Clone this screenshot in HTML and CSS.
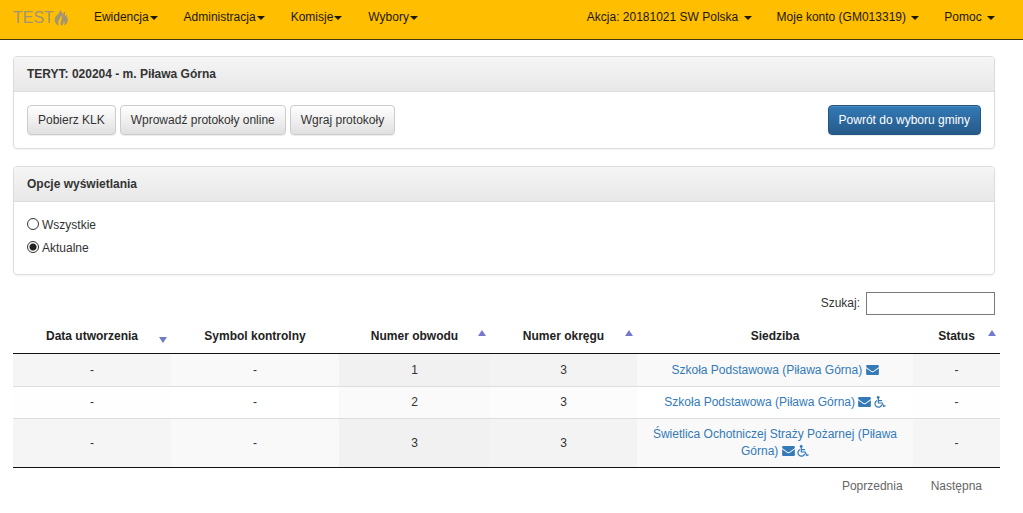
FILE: index.html
```html
<!DOCTYPE html>
<html lang="pl">
<head>
<meta charset="utf-8">
<title>Protokoły - m. Piława Górna</title>
<link rel="stylesheet" href="styles.css">
</head>
<body>
<svg class="symbols" aria-hidden="true">
  <symbol id="envelope" viewBox="0 256 1792 1408"><path fill="currentColor" d="M1792 710v794q0 66-47 113t-113 47h-1472q-66 0-113-47t-47-113v-794q44 49 101 87 362 246 497 345 57 42 92.500 65.500t94.500 48 110 24.500h2q51 0 110-24.500t94.500-48 92.500-65.500q170-123 498-345 57-39 100-87zm0-294q0 79-49 151t-122 123q-376 261-468 325-10 7-42.500 31t-54 38.500-52 32.500-57.500 27-50 9h-2q-23 0-50-9t-57.500-27-52-32.500-54-38.500-42.500-31q-91-64-262-182.500t-205-142.500q-62-42-117-115.500t-55-136.500q0-78 41.500-130t118.500-52h1472q65 0 112.500 47t47.500 113z"/></symbol>
  <symbol id="wheelchair" viewBox="0 0 12 12"><circle cx="4.200" cy="1.400" r="1.400" fill="currentColor"/><path fill="none" stroke="currentColor" stroke-width="1.200" d="M4.300 2v5h4l1.400 3.500 1.800-.9M4.300 4.600h3.700M3 4.500A3.500 3.500 0 1 0 7.800 8.800"/></symbol>
</svg>
<header class="navbar">
  <a class="brand" href="#">TEST<svg class="flame" viewBox="0 0 14 16" aria-hidden="true"><path fill="currentColor" d="M6 0C6.500 3 2 5 1 8c-1 3 0 6 4 8C3.500 13 4 11 5.500 9c1-1.500 1.600-2.500 1.400-4C8.500 7 8 9 7 11c-.8 2-.6 3.500.5 5 2-1.500 2.500-3 2-5.500C11 12 10.800 14 10 15.500c3.500-1.500 4.500-5 3.500-7.500-.3-1-1-2-1-3.500-.8.700-1 1.500-1 2.500C10.500 5 11 3 11.500 1.500 9.500 2 9 4 9 5 8.500 3 8 1 6 0z"/></svg></a>
  <nav class="menu">
    <a href="#">Ewidencja<span class="caret"></span></a>
    <a href="#">Administracja<span class="caret"></span></a>
    <a href="#">Komisje<span class="caret"></span></a>
    <a href="#">Wybory<span class="caret"></span></a>
  </nav>
  <nav class="menu menu-right">
    <a href="#">Akcja: 20181021 SW Polska <span class="caret"></span></a>
    <a href="#">Moje konto (GM013319) <span class="caret"></span></a>
    <a href="#">Pomoc <span class="caret"></span></a>
  </nav>
</header>
<main class="page">
  <section class="panel">
    <h2 class="panel-heading">TERYT: 020204 - m. Piława Górna</h2>
    <div class="panel-body toolbar">
      <button class="btn" type="button">Pobierz KLK</button>
      <button class="btn" type="button">Wprowadź protokoły online</button>
      <button class="btn" type="button">Wgraj protokoły</button>
      <button class="btn btn-primary" type="button">Powrót do wyboru gminy</button>
    </div>
  </section>
  <section class="panel">
    <h2 class="panel-heading">Opcje wyświetlania</h2>
    <div class="panel-body options">
      <label class="option"><input type="radio" name="view">Wszystkie</label>
      <label class="option"><input type="radio" name="view" checked>Aktualne</label>
    </div>
  </section>
  <div class="search">
    <label for="search">Szukaj:</label>
    <input id="search" type="search">
  </div>
  <div class="table-wrap">
    <table class="data">
      <colgroup><col class="c-date"><col class="c-symbol"><col class="c-ward"><col class="c-district"><col class="c-seat"><col class="c-status"></colgroup>
      <thead>
        <tr><th class="sort-desc">Data utworzenia</th><th>Symbol kontrolny</th><th class="sort-asc">Numer obwodu</th><th class="sort-asc">Numer okręgu</th><th>Siedziba</th><th class="sort-asc">Status</th></tr>
      </thead>
      <tbody>
        <tr><td class="s3">-</td><td>-</td><td class="s1">1</td><td class="s2">3</td><td><a href="#">Szkoła Podstawowa (Piława Górna) <svg class="envelope"><use href="#envelope"/></svg></a></td><td class="s3">-</td></tr>
        <tr><td class="s3">-</td><td>-</td><td class="s1">2</td><td class="s2">3</td><td><a href="#">Szkoła Podstawowa (Piława Górna) <svg class="envelope"><use href="#envelope"/></svg> <svg class="wheelchair"><use href="#wheelchair"/></svg></a></td><td class="s3">-</td></tr>
        <tr><td class="s3">-</td><td>-</td><td class="s1">3</td><td class="s2">3</td><td><a href="#">Świetlica Ochotniczej Straży Pożarnej (Piława Górna) <svg class="envelope"><use href="#envelope"/></svg> <svg class="wheelchair"><use href="#wheelchair"/></svg></a></td><td class="s3">-</td></tr>
      </tbody>
    </table>
  </div>
  <div class="pager">
    <button type="button">Poprzednia</button>
    <button type="button">Następna</button>
  </div>
</main>
</body>
</html>
```
FILE: styles.css
```css
* { box-sizing: border-box; }

body {
  margin: 0;
  background: #fff;
  color: #333;
  font: 12px/17px "Liberation Sans", Arial, sans-serif;
}

button, input { font: inherit; color: inherit; }
a { color: #337ab7; text-decoration: none; }
.symbols { display: none; }

.navbar {
  display: flex;
  align-items: center;
  gap: 26px;
  height: 40px;
  padding: 0 28px 4px 13px;
  background: #ffbf00;
  border-bottom: 1px solid #3f3a10;
}
.brand {
  display: flex;
  align-items: center;
  color: #a39473;
  font-size: 16px;
}
.flame { width: 14px; height: 16px; }
.menu { display: flex; gap: 26px; }
.menu a { color: #1c1700; white-space: nowrap; }
.menu-right { gap: 25px; margin-left: auto; }
.caret {
  display: inline-block;
  margin-left: 1px;
  vertical-align: middle;
  border: 4px solid transparent;
  border-top-color: currentColor;
  border-bottom: 0;
}
.menu-right .caret { margin-left: 2px; }

.page { padding: 16px 28px 16px 13px; }

.panel {
  margin-bottom: 17px;
  border: 1px solid #ddd;
  border-radius: 4px;
  box-shadow: 0 1px 2px rgba(0, 0, 0, .05);
}
.panel-heading {
  margin: 0;
  padding: 8px 13px;
  border-bottom: 1px solid #ddd;
  border-radius: 3px 3px 0 0;
  background: linear-gradient(#f5f5f5, #e8e8e8);
  font-size: 12px;
  line-height: 18px;
}
.panel-body { padding: 13px; }

.toolbar { display: flex; gap: 4px; }
.btn {
  height: 30px;
  padding: 0 10px;
  border: 1px solid #ccc;
  border-radius: 4px;
  background: linear-gradient(#fff, #e0e0e0);
  box-shadow: inset 0 1px 0 rgba(255, 255, 255, .15), 0 1px 1px rgba(0, 0, 0, .075);
}
.btn-primary {
  margin-left: auto;
  border-color: #245580;
  background: linear-gradient(#337ab7, #265a88);
  color: #fff;
}

.options {
  display: flex;
  flex-direction: column;
  align-items: flex-start;
  gap: 6px;
  padding: 15px 13px 17px;
}
.option { display: flex; gap: 3px; }
.option input {
  appearance: none;
  width: 12px;
  height: 12px;
  margin: 1px 0 0;
  border: 1px solid #333;
  border-radius: 50%;
  background: #fff;
}
.option input:checked { background: radial-gradient(circle, #222 3px, #fff 4px); }

.search {
  display: flex;
  justify-content: flex-end;
  align-items: center;
  gap: 6px;
  margin-bottom: 5px;
}
.search input {
  appearance: none;
  width: 129px;
  height: 23px;
  padding: 1px 4px;
  border: 1px solid #7a7a7a;
  background: #fff;
}

.table-wrap { margin-right: -5px; }
.data {
  width: 100%;
  table-layout: fixed;
  border-collapse: separate;
  border-spacing: 0;
  border-bottom: 1px solid #111;
  text-align: center;
}
.c-date { width: 158px; }
.c-symbol { width: 168px; }
.c-ward { width: 151px; }
.c-district { width: 147px; }
.c-seat { width: 276px; }
.c-status { width: 87px; }

.data th {
  position: relative;
  padding: 8px 12px;
  border-bottom: 1px solid #111;
  color: #222;
}
.sort-asc::after, .sort-desc::after {
  content: "";
  position: absolute;
  right: 4px;
  border: 4px solid transparent;
}
.sort-asc::after { top: 10px; border-top: 0; border-bottom: 6px solid #7678d0; }
.sort-desc::after { top: 17px; border-bottom: 0; border-top: 6px solid #6f7cc4; }

.data td { padding: 7px 12px; border-top: 1px solid #ddd; }
.data tbody tr:first-child td { border-top: 0; }
.data tbody tr { height: 32px; }
.data tbody tr:nth-child(odd) { background: #f9f9f9; }
.s1 { background: #fafafa; }
.s2 { background: #fcfcfc; }
.s3 { background: #fefefe; }
tr:nth-child(odd) .s1 { background: #f1f1f1; }
tr:nth-child(odd) .s2 { background: #f3f3f3; }
tr:nth-child(odd) .s3 { background: #f5f5f5; }

.envelope { width: 13px; height: 10px; vertical-align: -1px; }
.wheelchair { width: 12px; height: 12px; margin-left: -1px; vertical-align: -2px; }

.pager {
  display: flex;
  justify-content: flex-end;
  gap: 2px;
  margin-top: 4px;
}
.pager button {
  padding: 6px 13px;
  border: 0;
  background: none;
  color: #666;
  line-height: 17px;
}
```
